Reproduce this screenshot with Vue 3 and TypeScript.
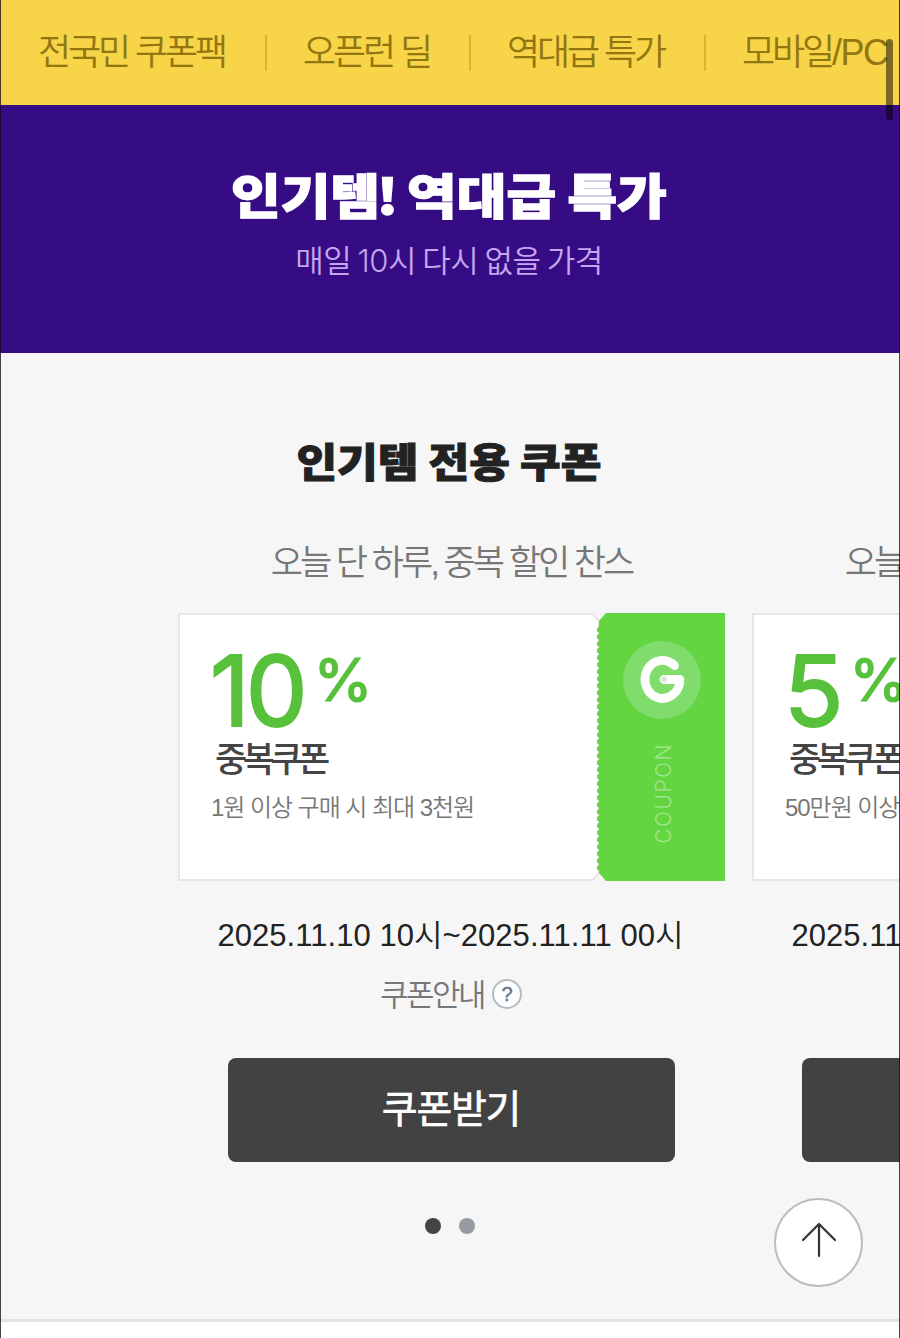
<script setup lang="ts">
interface Tab {
  label: string
  latin?: string
}

interface Coupon {
  id: number
  notice: string
  rate: string
  name: string
  condition: string
  period: string
}

const tabs: Tab[] = [
  { label: '전국민 쿠폰팩' },
  { label: '오픈런 딜' },
  { label: '역대급 특가' },
  { label: '모바일', latin: '/PC' },
]

const coupons: Coupon[] = [
  {
    id: 1,
    notice: '오늘 단 하루, 중복 할인 찬스',
    rate: '10',
    name: '중복쿠폰',
    condition: '1원 이상 구매 시 최대 3천원',
    period: '2025.11.10 10시~2025.11.11 00시',
  },
  {
    id: 2,
    notice: '오늘 단 하루, 중복 할인 찬스',
    rate: '5',
    name: '중복쿠폰',
    condition: '50만원 이상 구매 시',
    period: '2025.11.10 10시~2025.11.11 00시',
  },
]
</script>

<template>
  <main class="page">
    <nav class="tabs">
      <a v-for="(tab, i) in tabs" :key="tab.label" class="tab" :class="`tab-${i}`">{{ tab.label }}<span v-if="tab.latin" class="latin">{{ tab.latin }}</span></a>
    </nav>
    <div class="scrollbar"></div>

    <header class="hero">
      <h1>인기템<span class="bang">!</span> 역대급 특가</h1>
      <p>매일 10시 다시 없을 가격</p>
    </header>

    <section class="coupons">
      <h2>인기템 전용 쿠폰</h2>
      <div class="track">
        <article v-for="coupon in coupons" :key="coupon.id" class="slide">
          <p class="notice">{{ coupon.notice }}</p>
          <div class="ticket">
            <svg class="ticket-shape" width="548" height="268" viewBox="0 0 548 268">
              <path d="M1 1H415L421 8V260L415 267H1Z" fill="#fff" stroke="#e6e6e6" stroke-width="2" />
              <path d="M428 0H547V268H428L421 260V8Z" fill="#62d541" />
              <path d="M421 16V256" stroke="#62d541" stroke-width="4" stroke-linecap="round" stroke-dasharray="1.5 5.5" />
            </svg>
            <div class="ticket-body">
              <div class="rate"><span class="number">{{ coupon.rate }}</span><span class="percent">%</span></div>
              <p class="name">{{ coupon.name }}</p>
              <p class="condition">{{ coupon.condition }}</p>
            </div>
            <div class="stub">
              <svg width="78" height="78" viewBox="0 0 78 78">
                <circle cx="39" cy="39" r="39" fill="#80dd6c" />
                <path d="M51.500 24.500A17.500 19 0 1 0 57 38.500H41" fill="none" stroke="#fff" stroke-width="8.800" stroke-linecap="round" stroke-linejoin="round" />
                <circle cx="41" cy="38.500" r="3" fill="#d9e5d6" />
              </svg>
              <span class="stub-text">COUPON</span>
            </div>
          </div>
          <p class="period">{{ coupon.period }}</p>
          <div class="guide">
            <span class="guide-label">쿠폰안내</span>
            <i class="help">?</i>
          </div>
          <button class="download" type="button">쿠폰받기</button>
        </article>
      </div>
      <div class="dots"><i class="dot active"></i><i class="dot"></i></div>
    </section>

    <button class="to-top" type="button" aria-label="top">
      <svg width="36" height="36" viewBox="0 0 36 36" fill="none" stroke="#333" stroke-width="2.2" stroke-linecap="round" stroke-linejoin="round">
        <path d="M18 34V2M2 18L18 2L34 18" />
      </svg>
    </button>
  </main>
</template>

<style>
body {
  margin: 0;
}
</style>

<style scoped>
.page {
  position: relative;
  box-sizing: border-box;
  width: 900px;
  height: 1338px;
  overflow: hidden;
  background: #fff;
  font-family: "Liberation Sans", "Noto Sans CJK KR", sans-serif;
}
.page::after {
  content: "";
  position: absolute;
  inset: 0;
  border: solid rgba(20, 10, 30, 0.78);
  border-width: 0 1px;
  pointer-events: none;
}
h1, h2, p {
  margin: 0;
  white-space: nowrap;
}
button {
  padding: 0;
  border: 0;
  font-family: inherit;
}
.tabs {
  display: flex;
  align-items: center;
  height: 105px;
  padding-left: 38px;
  background: #f7d448;
}
.tab {
  flex: none;
  box-sizing: border-box;
  height: 36px;
  color: #927711;
  font-size: 36px;
  font-weight: 350;
  line-height: 36px;
  letter-spacing: -3.1px;
  white-space: nowrap;
}
.latin {
  letter-spacing: -1.6px;
}
.tab + .tab {
  padding-left: 36px;
  border-left: 2px solid #d7b536;
}
.tab-0 { width: 227px; }
.tab-1 { width: 204px; }
.tab-2 { width: 235px; }
.scrollbar {
  position: absolute;
  top: 39px;
  left: 886px;
  z-index: 2;
  width: 7px;
  height: 81px;
  border-radius: 4px;
  background: rgba(0, 0, 0, 0.5);
}
.hero {
  box-sizing: border-box;
  height: 248px;
  padding-top: 59px;
  background: #360c84;
  text-align: center;
}
h1 {
  padding-right: 2px;
  color: #fff;
  font-family: "Noto Sans CJK KR", sans-serif;
  font-size: 48px;
  font-weight: 900;
  line-height: 58px;
  word-spacing: -1px;
  transform: scaleX(1.125);
  -webkit-text-stroke: 1.3px #fff;
}
.bang {
  margin: 0 -2px 0 -3px;
}
.hero p {
  margin-top: 19px;
  padding-right: 2px;
  color: #c5a5ef;
  font-family: Inter, "Noto Sans CJK KR", sans-serif;
  font-size: 31px;
  font-weight: 350;
  line-height: 40px;
  letter-spacing: -0.5px;
  word-spacing: -2px;
}
.coupons {
  box-sizing: border-box;
  height: 969px;
  padding-top: 79px;
  border-bottom: 3px solid #e3e3e3;
  background: #f6f6f7;
}
h2 {
  padding-right: 2px;
  color: #222;
  font-family: "Noto Sans CJK KR", sans-serif;
  font-size: 40px;
  font-weight: 900;
  line-height: 56px;
  text-align: center;
  transform: scaleX(1.105);
  -webkit-text-stroke: 1px #222;
}
.track {
  display: flex;
  gap: 27px;
  margin: 49px 0 0 178px;
}
.slide {
  flex: none;
  display: flex;
  flex-direction: column;
  align-items: center;
  width: 547px;
}
.notice {
  height: 48px;
  color: #777;
  font-size: 35px;
  font-weight: 350;
  line-height: 51px;
  letter-spacing: -3px;
}
.ticket {
  position: relative;
  display: flex;
  width: 547px;
  height: 268px;
  margin-top: 28px;
}
.ticket-shape {
  position: absolute;
  inset: 0;
}
.ticket-body {
  position: relative;
  width: 421px;
  padding-left: 33px;
  box-sizing: border-box;
}
.rate {
  display: flex;
  height: 124px;
  margin-left: -1px;
  color: #58c13c;
  font-family: Inter, sans-serif;
}
.number {
  font-size: 98px;
  line-height: 156px;
  letter-spacing: -4px;
  -webkit-text-stroke: 2px #58c13c;
}
.percent {
  margin-left: 10px;
  font-size: 59px;
  font-weight: 500;
  line-height: 134px;
  -webkit-text-stroke: 1px #58c13c;
}
.name {
  height: 44px;
  padding-left: 4px;
  color: #444;
  font-size: 35px;
  font-weight: 500;
  line-height: 46px;
  letter-spacing: -4.5px;
}
.condition {
  margin-top: 8px;
  color: #777;
  font-size: 24px;
  font-weight: 350;
  line-height: 38px;
  letter-spacing: -1.05px;
}
.stub {
  position: relative;
  display: flex;
  flex-direction: column;
  align-items: center;
  width: 126px;
  padding-top: 28px;
}
.stub-text {
  margin: 24px 0 0 4px;
  color: #a0e58d;
  font-family: Inter, sans-serif;
  font-size: 21px;
  font-weight: 300;
  line-height: 26px;
  letter-spacing: 1.5px;
  writing-mode: vertical-rl;
  transform: rotate(180deg);
}
.period {
  height: 40px;
  margin-top: 34px;
  padding-right: 2px;
  color: #222;
  font-size: 31px;
  font-weight: 350;
  line-height: 42px;
  letter-spacing: 0.05px;
}
.guide {
  display: flex;
  align-items: center;
  gap: 8px;
  height: 40px;
  margin-top: 19px;
  padding-right: 1px;
  color: #777;
  font-size: 31px;
  font-weight: 350;
  line-height: 36px;
  letter-spacing: -2.5px;
}
.guide-label {
  padding-top: 4px;
}
.help {
  box-sizing: border-box;
  width: 30px;
  height: 30px;
  border: 2px solid #b5bbc1;
  border-radius: 50%;
  background: #fcfdfe;
  color: #687481;
  font-size: 20px;
  font-style: normal;
  line-height: 26px;
  letter-spacing: 0;
  text-align: center;
  -webkit-text-stroke: 0.4px #687481;
}
.download {
  width: 447px;
  height: 104px;
  padding-right: 1px;
  margin-top: 44px;
  border-radius: 8px;
  background: #424242;
  color: #fff;
  font-size: 39px;
  font-weight: 400;
  line-height: 98px;
  letter-spacing: -1.3px;
  -webkit-text-stroke: 0.6px #fff;
}
.dots {
  display: flex;
  justify-content: center;
  gap: 18px;
  margin-top: 56px;
}
.dot {
  width: 16px;
  height: 16px;
  border-radius: 50%;
  background: #969ba1;
}
.dot.active {
  background: #444;
}
.to-top {
  position: absolute;
  top: 1198px;
  left: 774px;
  display: flex;
  align-items: center;
  justify-content: center;
  box-sizing: border-box;
  width: 89px;
  height: 89px;
  padding-bottom: 6px;
  border: 2px solid #bcbcbc;
  border-radius: 50%;
  background: #fff;
}
</style>
